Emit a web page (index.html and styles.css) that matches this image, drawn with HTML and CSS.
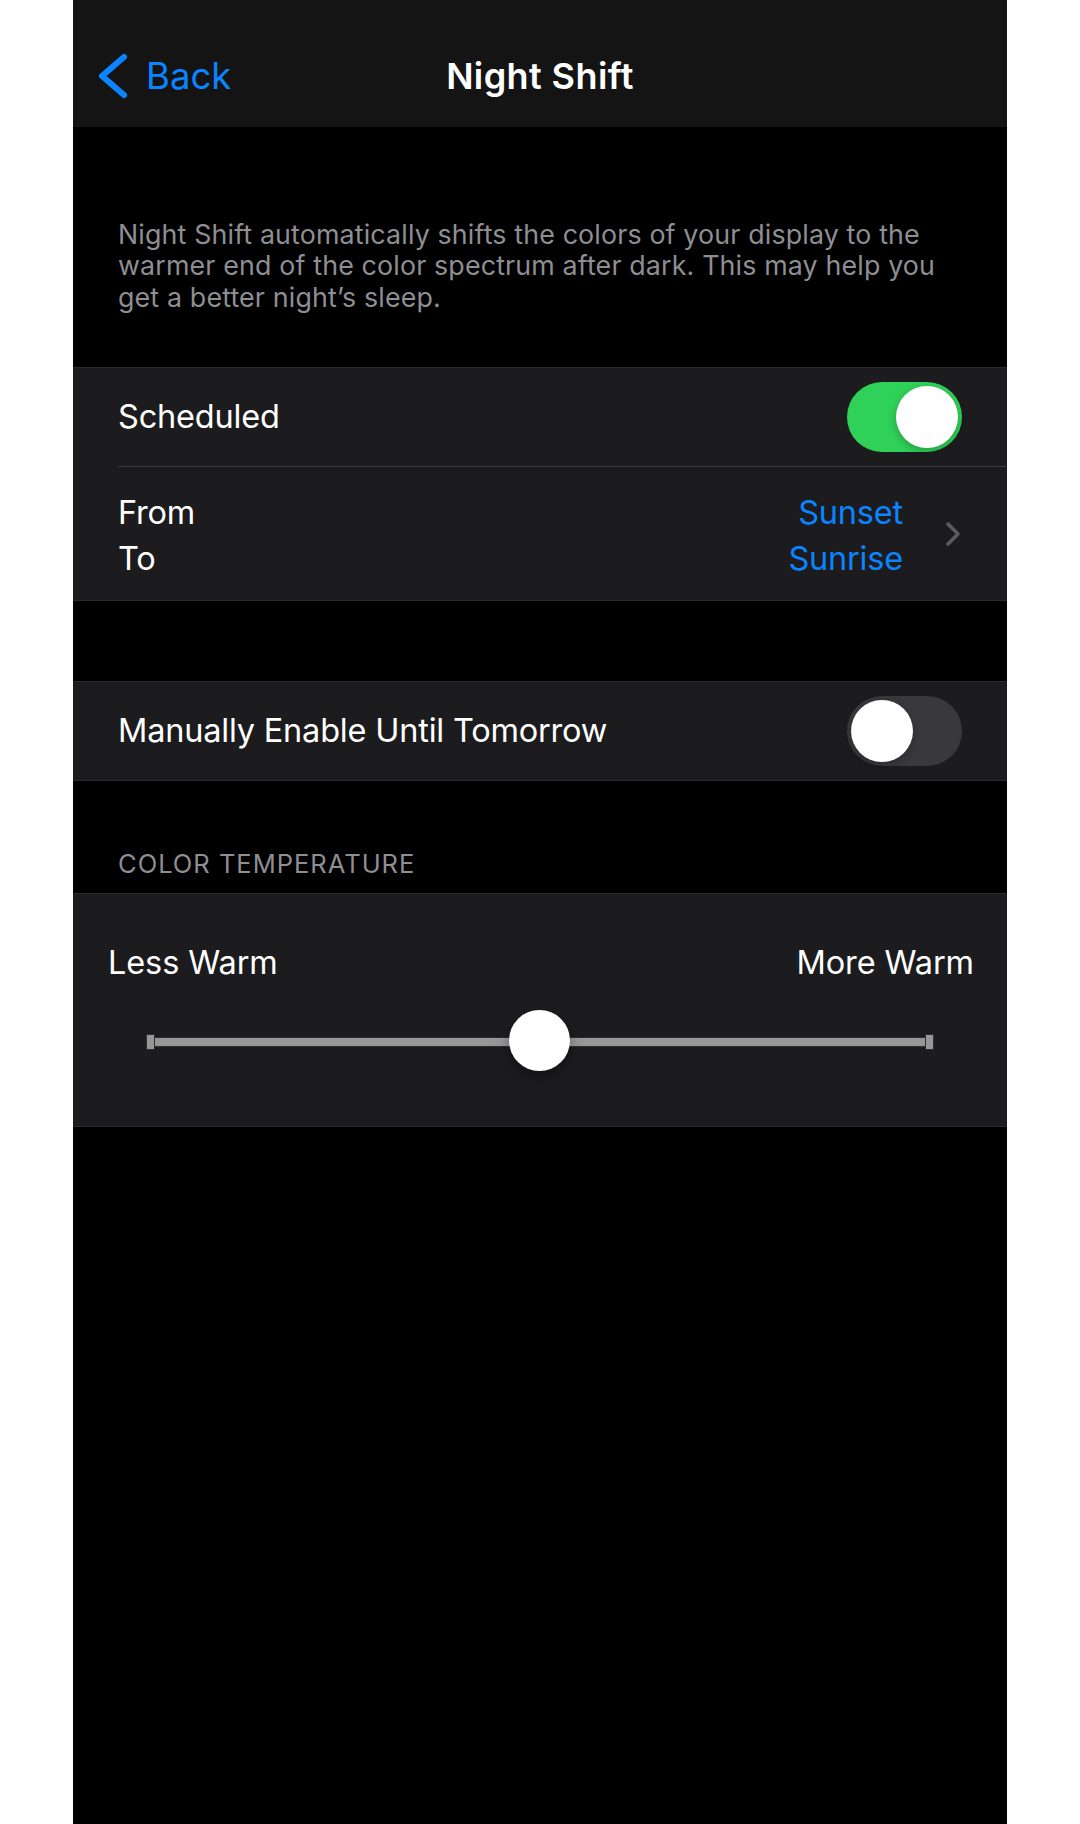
FILE: index.html
```html
<!DOCTYPE html>
<html lang="en">

<head>
    <meta charset="UTF-8">
    <meta name="viewport" content="width=device-width, initial-scale=1.0">
    <title>Night Shift</title>
    <link rel="stylesheet" href="styles.css">
</head>

<body>
    <div class="phone">
        <div class="nav">
            <a href="javascript:;" class="back">
                <svg width="30" height="46" viewBox="0 0 30 46">
                    <polyline points="26,4 4,23 26,42" fill="none" stroke="#0a84ff" stroke-width="6" stroke-linecap="round" stroke-linejoin="round" />
                </svg>
                <span>Back</span>
            </a>
            <h1 class="title">Night Shift</h1>
            <div></div>
        </div>

        <p class="note">Night Shift automatically shifts the colors of your display to the<br>warmer end of the color spectrum after dark. This may help you<br>get a better night’s sleep.</p>

        <div class="group">
            <div class="row">
                <span>Scheduled</span>
                <span class="switch on"><i></i></span>
            </div>
            <div class="row row-tall">
                <div class="pair">
                    <span>From</span>
                    <span>To</span>
                </div>
                <div class="times">
                    <div class="pair values">
                        <span>Sunset</span>
                        <span>Sunrise</span>
                    </div>
                    <svg width="16" height="26" viewBox="0 0 16 26">
                        <polyline points="3,3 13,13 3,23" fill="none" stroke="#5c5c60" stroke-width="3.5" stroke-linecap="round" stroke-linejoin="round" />
                    </svg>
                </div>
            </div>
        </div>

        <div class="group gap">
            <div class="row">
                <span>Manually Enable Until Tomorrow</span>
                <span class="switch"><i></i></span>
            </div>
        </div>

        <div class="header">COLOR TEMPERATURE</div>

        <div class="group temp">
            <div class="labels">
                <span>Less Warm</span>
                <span>More Warm</span>
            </div>
            <div class="slider">
                <div class="track">
                    <b class="cap"></b>
                    <b class="line"></b>
                    <b class="cap"></b>
                    <i class="knob"></i>
                </div>
            </div>
        </div>
    </div>
</body>

</html>
```

FILE: styles.css
```css
* {
    margin: 0;
    padding: 0;
    box-sizing: border-box;
}

body {
    background-color: #fff;
    font-family: Inter, "Noto Sans", sans-serif;
}

a {
    text-decoration: none;
}

.phone {
    width: 934px;
    min-height: 1824px;
    margin: 0 auto;
    background-color: #000;
    color: #fff;
}

/* 顶部导航 */
.nav {
    display: grid;
    grid-template-columns: 1fr auto 1fr;
    align-items: center;
    height: 127px;
    padding: 50px 25px 25px;
    background-color: #141414;
    line-height: 52px;
}

.back {
    display: flex;
    align-items: center;
    color: #0a84ff;
    font-size: 36.5px;
}

.back svg {
    margin-right: 18px;
}

.title {
    font-size: 36px;
    font-weight: 600;
    letter-spacing: 0.4px;
}

.note {
    padding: 92px 45px 54px;
    color: #8e8e93;
    font-size: 26.8px;
    line-height: 31.3px;
    letter-spacing: 0.15px;
}

/* 分组 */
.group {
    background-color: #1c1c1e;
    border-top: 1px solid #2a2a2c;
    border-bottom: 1px solid #2a2a2c;
}

.gap {
    margin-top: 80px;
}

.row {
    display: flex;
    align-items: center;
    justify-content: space-between;
    height: 98px;
    margin-left: 45px;
    padding-right: 45px;
    font-size: 32.5px;
    letter-spacing: -0.2px;
}

.row-tall {
    height: 134px;
    padding-top: 6px;
    border-top: 1px solid #38383a;
}

.pair {
    display: flex;
    flex-direction: column;
    line-height: 46px;
}

.values {
    align-items: flex-end;
    color: #0a84ff;
}

.times {
    display: flex;
    align-items: center;
    gap: 42px;
}

.times svg {
    margin: -4px 1px 0 0;
}

/* 开关 */
.switch {
    position: relative;
    width: 115px;
    height: 70px;
    border-radius: 35px;
    background-color: #39393d;
}

.switch i {
    position: absolute;
    top: 4px;
    left: 4px;
    width: 62px;
    height: 62px;
    border-radius: 50%;
    background-color: #fff;
    box-shadow: 0 3px 8px rgba(0, 0, 0, 0.25);
}

.switch.on {
    background-color: #30d158;
}

.switch.on i {
    left: 49px;
}

.header {
    padding: 68px 45px 14px;
    color: #8e8e93;
    font-size: 25.5px;
    line-height: 30px;
    letter-spacing: 1px;
}

/* 色温滑块 */
.temp {
    padding: 49px 0 53px;
}

.labels {
    display: flex;
    justify-content: space-between;
    padding: 0 33px 0 35px;
    font-size: 32.5px;
    line-height: 40px;
    letter-spacing: -0.1px;
}

.slider {
    margin-top: 28px;
    padding: 0 73px;
}

.track {
    position: relative;
    display: flex;
    align-items: center;
    height: 62px;
}

.track .cap {
    width: 9px;
    height: 16px;
    background-color: #979797;
    border: 1px solid #2e2e2e;
}

.track .line {
    flex: 1;
    height: 10px;
    background-color: #979797;
    border-top: 1px solid #2e2e2e;
    border-bottom: 1px solid #2e2e2e;
}

.knob {
    position: absolute;
    top: -1px;
    left: 50%;
    width: 61px;
    height: 61px;
    margin-left: -31px;
    border-radius: 50%;
    background-color: #fff;
    box-shadow: 0 6px 14px rgba(0, 0, 0, 0.35);
}
```
